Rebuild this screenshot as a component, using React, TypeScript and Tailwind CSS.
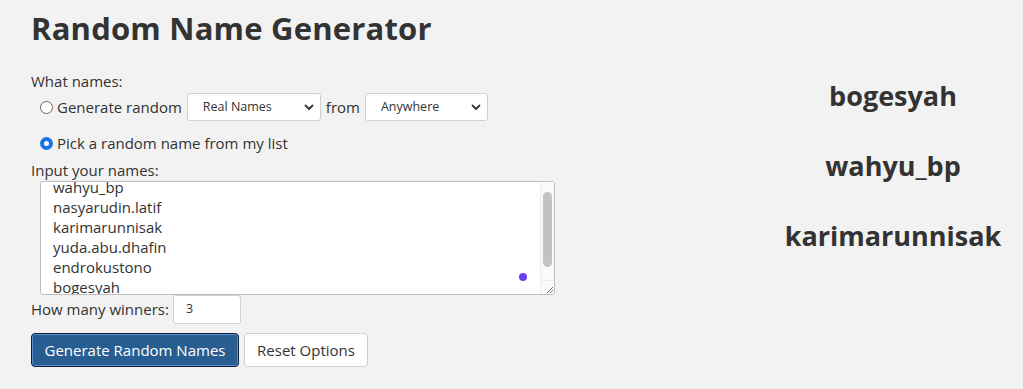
import React from "react";

const names = [
  "wahyu_bp",
  "nasyarudin.latif",
  "karimarunnisak",
  "yuda.abu.dhafin",
  "endrokustono",
  "bogesyah",
];

function Chevron() {
  return (
    <svg width="10" height="7" viewBox="0 0 10 7" className="shrink-0">
      <path d="M1.5 1.5 L5 5 L8.5 1.5" fill="none" stroke="#333" strokeWidth="1.8" strokeLinecap="round" strokeLinejoin="round" />
    </svg>
  );
}

function Select({ label, w }: { label: string; w: string }) {
  return (
    <div className={`${w} h-[28px] bg-white border border-[#d0d0d0] rounded-[3px] flex items-center justify-between pl-[15px] pr-[6px] text-[12.5px] text-[#333]`}>
      <span>{label}</span>
      <Chevron />
    </div>
  );
}

function Radio({ checked }: { checked?: boolean }) {
  return checked ? (
    <span className="w-[13px] h-[13px] rounded-full bg-[#1a73e8] flex items-center justify-center shrink-0">
      <span className="w-[5px] h-[5px] rounded-full bg-white" />
    </span>
  ) : (
    <span className="w-[13px] h-[13px] rounded-full border border-[#666] bg-white shrink-0" />
  );
}

export default function App() {
  return (
    <div className="w-[1023px] h-[389px] bg-[#f2f2f2] text-[#333] overflow-hidden flex" style={{ fontFamily: '"Open Sans", sans-serif' }}>
      <div className="w-[740px] pl-[31px] pt-[8px] flex flex-col">
        <h1 className="text-[31px] font-bold leading-[40px] text-[#333] tracking-[0.2px]">Random Name Generator</h1>
        <div className="mt-[24px] text-[15px] leading-[18px]">What names:</div>
        <div className="mt-[3px] ml-[9px] flex items-center h-[28px] text-[15px]">
          <Radio />
          <span className="ml-[4px] mr-[5px]">Generate random</span>
          <Select label="Real Names" w="w-[134px]" />
          <span className="mx-[5px]">from</span>
          <Select label="Anywhere" w="w-[123px]" />
        </div>
        <div className="mt-[12px] ml-[9px] flex items-center h-[20px] text-[15px]">
          <Radio checked />
          <span className="ml-[4px]">Pick a random name from my list</span>
        </div>
        <div className="mt-[8px] text-[15px] leading-[18px]">Input your names:</div>
        <div className="mt-[2px] ml-[9px] w-[515px] h-[114px] bg-white border border-[#bdbdbd] rounded-[3px] flex overflow-hidden">
          <div className="flex-1 relative overflow-hidden pl-[12px]">
            <div className="mt-[-5px] text-[15px] leading-[20px]">
              {names.map((n) => (
                <div key={n}>{n}</div>
              ))}
            </div>
            <span className="absolute right-[13px] bottom-[13px] w-[8px] h-[8px] rounded-full bg-[#6841f0]" />
          </div>
          <div className="w-[14px] bg-[#fafafa] border-l border-[#ececec] flex flex-col">
            <div className="flex-1 pt-[10px] pb-[13px] px-[2px]">
              <div className="w-[9px] h-[75px] rounded-full bg-[#c2c2c2]" />
            </div>
            <div className="h-[14px] border-t border-[#ececec] flex items-end justify-end">
              <svg width="10" height="10" viewBox="0 0 10 10">
                <path d="M9 3 L3 9 M9 6 L6 9" stroke="#777" strokeWidth="1" />
              </svg>
            </div>
          </div>
        </div>
        <div className="flex items-center h-[29px]">
          <span className="text-[15px]">How many winners:</span>
          <div className="ml-[4px] w-[68px] h-[29px] bg-white border border-[#d0d0d0] rounded-[3px] flex items-center pl-[12px] text-[12.5px]">3</div>
        </div>
        <div className="mt-[9px] flex gap-[5px]">
          <button className="w-[208px] h-[34px] rounded-[4px] border border-[#0f1d33] bg-[#285d92] text-white text-[15px] shadow-[inset_0_0_0_1px_#5a8fd0]">Generate Random Names</button>
          <button className="w-[124px] h-[34px] rounded-[4px] border border-[#d0d0d0] bg-white text-[#333] text-[15px]">Reset Options</button>
        </div>
      </div>
      <div className="flex-1 flex flex-col items-center pt-[77px] gap-[32px] pl-[23px]">
        <div className="text-[27px] font-bold leading-[38px]">bogesyah</div>
        <div className="text-[27px] font-bold leading-[38px]">wahyu_bp</div>
        <div className="text-[27px] font-bold leading-[38px]">karimarunnisak</div>
      </div>
    </div>
  );
}
